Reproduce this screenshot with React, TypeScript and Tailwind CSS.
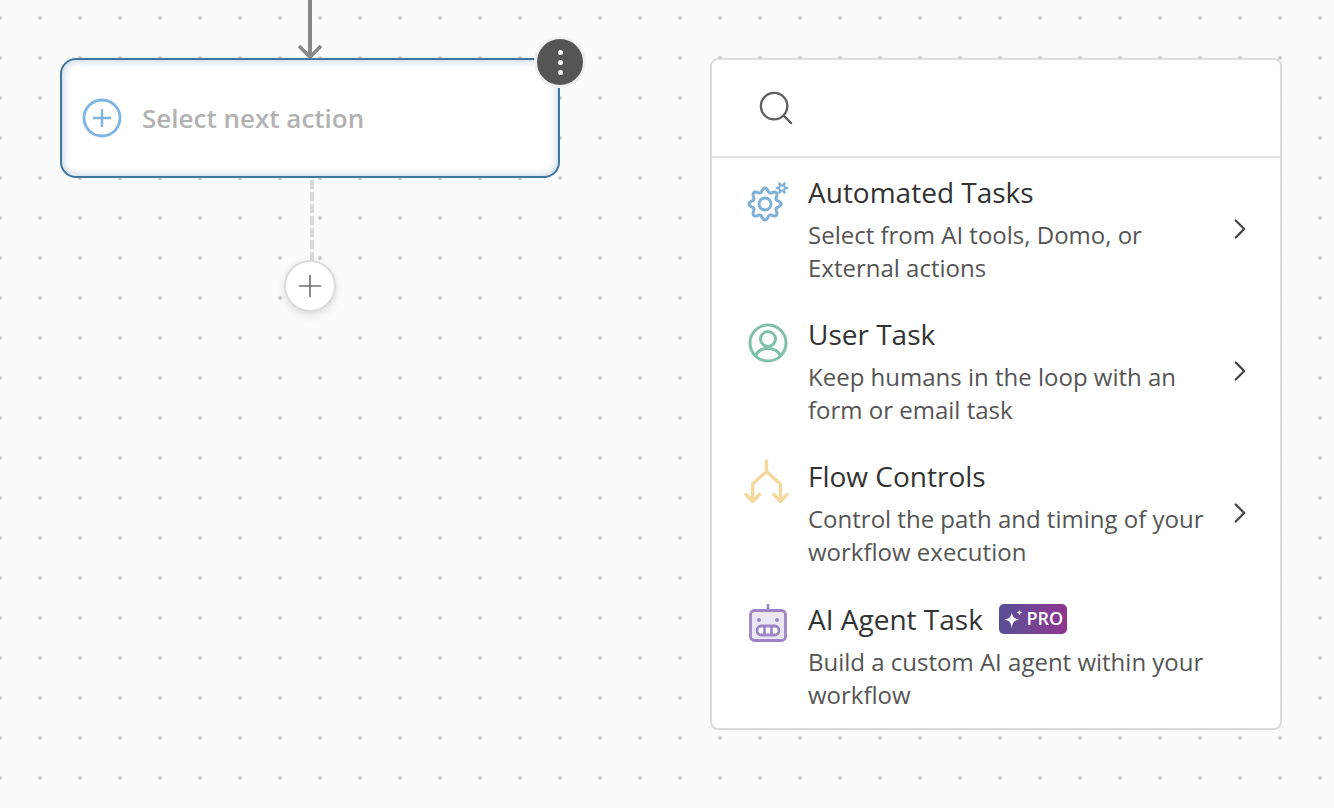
import { ChevronRight, Plus } from 'lucide-react';
import type { ReactNode } from 'react';

function gearPath(cx: number, cy: number, radius: number, wave: number, lobes: number) {
  const points: string[] = [];
  for (let i = 0; i < 144; i++) {
    const angle = (i / 144) * Math.PI * 2;
    const r = radius + wave * Math.cos(lobes * angle);
    points.push(`${(cx + r * Math.cos(angle)).toFixed(2)} ${(cy + r * Math.sin(angle)).toFixed(2)}`);
  }
  return `M${points.join('L')}Z`;
}

function GearIcon() {
  return (
    <svg width="44" height="44" viewBox="0 0 44 44" fill="none" stroke="#7eb0d8" strokeWidth="3">
      <path d={gearPath(19, 24, 14, 2, 8)} />
      <circle cx="19" cy="24" r="6" />
      <path d={gearPath(36, 8, 5, 1.6, 6)} fill="#7eb0d8" stroke="none" />
      <circle cx="36" cy="8" r="1.800" fill="#fff" stroke="none" />
    </svg>
  );
}

function UserIcon() {
  return (
    <svg width="40" height="40" viewBox="0 0 40 40" fill="none" stroke="#7fc0a9" strokeWidth="3">
      <circle cx="20" cy="20" r="18" />
      <circle cx="20" cy="16" r="7.5" />
      <path d="M7.5 32.5C10 27.5 14 25.5 20 25.5S30 27.5 32.5 32.5" />
    </svg>
  );
}

function FlowIcon() {
  return (
    <svg width="46" height="46" viewBox="0 0 48 48" fill="none" stroke="#f3da9c" strokeWidth="3.6" strokeLinecap="round" strokeLinejoin="round">
      <path d="M23.500 2V13L9 26V44M23.500 13L38 26V44" />
      <path d="M2 37L9 44L16 37M31 37L38 44L45 37" />
    </svg>
  );
}

function RobotIcon() {
  return (
    <svg width="40" height="40" viewBox="0 0 40 40" fill="none" stroke="#9d84c9" strokeWidth="2.800">
      <path d="M20 1V7" strokeWidth="2.600" />
      <rect x="2.500" y="7.500" width="35" height="30" rx="4" fill="#ece5f6" />
      <circle cx="11" cy="17" r="2" fill="#9d84c9" stroke="none" />
      <circle cx="29" cy="17" r="2" fill="#9d84c9" stroke="none" />
      <rect x="9" y="23" width="22" height="9" rx="4.500" fill="#fff" strokeWidth="2.800" />
      <path d="M16.500 23V32M23.500 23V32" strokeWidth="2.600" />
    </svg>
  );
}

function ProBadge() {
  return (
    <span className="ml-4 -mt-px flex h-[30px] w-[68px] items-center justify-center gap-[2px] rounded-[5px] bg-gradient-to-r from-[#564f96] to-[#8e3490] text-[18px] font-semibold text-white">
      <svg width="22" height="22" viewBox="0 0 20 20" fill="#fff">
        <path d="M8 4C8.800 8 10 9.700 15 10.500C10 11.300 8.800 13 8 18.500C7.200 13 6 11.300 1 10.500C6 9.700 7.200 8 8 4Z" />
        <path d="M15 1.500C15.300 3 15.800 3.500 17.500 4C15.800 4.500 15.300 5 15 6.500C14.700 5 14.200 4.500 12.500 4C14.200 3.500 14.700 3 15 1.500Z" />
      </svg>
      PRO
    </span>
  );
}

type MenuItem = {
  icon: ReactNode;
  iconClass: string;
  title: string;
  lines: string[];
  badge?: boolean;
  chevron?: boolean;
};

const items: MenuItem[] = [
  { icon: <GearIcon />, iconClass: 'left-[32px] top-[20px]', title: 'Automated Tasks', lines: ['Select from AI tools, Domo, or', 'External actions'], chevron: true },
  { icon: <UserIcon />, iconClass: 'left-[32px] top-[19px]', title: 'User Task', lines: ['Keep humans in the loop with an', 'form or email task'], chevron: true },
  { icon: <FlowIcon />, iconClass: 'left-[31px] top-[16px]', title: 'Flow Controls', lines: ['Control the path and timing of your', 'workflow execution'], chevron: true },
  { icon: <RobotIcon />, iconClass: 'left-[32px] top-[15px]', title: 'AI Agent Task', lines: ['Build a custom AI agent within your', 'workflow'], badge: true },
];

export default function App() {
  return (
    <div
      className="flex h-[808px] w-[1334px] items-start gap-[150px] overflow-hidden bg-[#fbfbfb] bg-[radial-gradient(circle,#cccccc_1.500px,transparent_2.600px)] bg-[size:40px_40px] bg-[position:-20px_-2px] pl-[60px] text-[#333] [font-family:'Open_Sans',sans-serif]"
    >
      <div className="flex w-[500px] flex-col items-center">
        <svg width="28" height="58" viewBox="0 0 28 58" fill="none" stroke="#888">
          <path d="M14 0V56" strokeWidth="4" />
          <path d="M3 46L14 57L25 46" strokeWidth="3.500" />
        </svg>
        <div className="relative flex h-[120px] w-[500px] items-center rounded-[16px] border-2 border-[#41749f] bg-white pl-5 shadow-[inset_0_0_8px_rgba(65,116,159,0.4)]">
          <svg width="40" height="40" viewBox="0 0 40 40" fill="none" stroke="#7fb5e3">
            <circle cx="20" cy="20" r="18" strokeWidth="2.800" />
            <path d="M20 11V29M11 20H29" strokeWidth="2.400" />
          </svg>
          <span className="ml-5 text-[26px] font-semibold text-[#b2b2b2]">Select next action</span>
          <div className="absolute -top-[24px] -right-[28px] flex h-[52px] w-[52px] flex-col items-center justify-center gap-[5px] rounded-full border-[3px] border-[#f0f0f0] bg-[#555]">
            <span className="h-[5px] w-[5px] rounded-full bg-white" />
            <span className="h-[5px] w-[5px] rounded-full bg-white" />
            <span className="h-[5px] w-[5px] rounded-full bg-white" />
          </div>
        </div>
        <div className="ml-[4px] mt-[2px] h-[81px] w-[4px] bg-[repeating-linear-gradient(to_bottom,#d9d9d9_0,#d9d9d9_9px,transparent_9px,transparent_12px)]" />
        <div className="-mt-px flex h-[52px] w-[52px] items-center justify-center rounded-full border-2 border-[#dcdcdc] bg-white shadow-[0_3px_8px_rgba(0,0,0,0.12)]">
          <Plus size={36} strokeWidth={1.1} color="#707070" />
        </div>
      </div>

      <div className="mt-[58px] w-[572px] rounded-[8px] border-2 border-[#dcdcdc] bg-white">
        <div className="flex h-[98px] items-center border-b-2 border-[#e3e3e3] pl-[47px]">
          <svg width="34" height="34" viewBox="0 0 36 36" fill="none" stroke="#606060" strokeWidth="2.500">
            <circle cx="16" cy="16" r="14" />
            <path d="M26 26L34 34" strokeLinecap="round" />
          </svg>
        </div>
        {items.map((item) => (
          <div key={item.title} className="relative flex h-[142px] pl-[96px] pt-[16px] last:h-[144px] last:pt-[17px]">
            <div className={`absolute flex h-[48px] w-[48px] items-center justify-center ${item.iconClass}`}>
              {item.icon}
            </div>
            <div>
              <div className="flex h-[36px] items-center">
                <span className="text-[28px] leading-[36px] text-[#333]">{item.title}</span>
                {item.badge && <ProBadge />}
              </div>
              <div className="mt-[8px] text-[24px] leading-[33px] text-[#555]">
                {item.lines.map((line) => (
                  <div key={line}>{line}</div>
                ))}
              </div>
            </div>
            {item.chevron && (
              <ChevronRight size={34} strokeWidth={1.6} color="#444" className="absolute left-[511px] top-[54px]" />
            )}
          </div>
        ))}
      </div>
    </div>
  );
}
